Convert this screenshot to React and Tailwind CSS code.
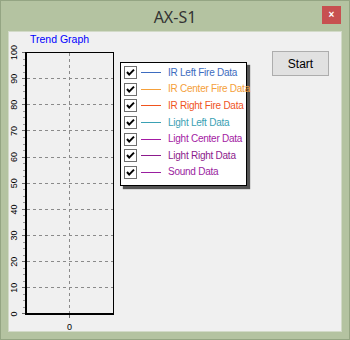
import React from "react";

const series = [
  { name: "IR Left Fire Data", color: "#3d6cc0" },
  { name: "IR Center Fire Data", color: "#f5a03a" },
  { name: "IR Right Fire Data", color: "#f0541e" },
  { name: "Light Left Data", color: "#3aa1b4" },
  { name: "Light Center Data", color: "#a31aa3" },
  { name: "Light Right Data", color: "#8c1b8c" },
  { name: "Sound Data", color: "#9a1ea0" },
];

function Chart() {
  const bottom = 282;
  const step = 26.15;
  const vals = [0, 10, 20, 30, 40, 50, 60, 70, 80, 90, 100];
  const minor = [];
  for (let k = 0; k < 40; k++) {
    if (k % 4 === 0) continue;
    minor.push(Math.floor(bottom - (k * step) / 4) + 0.5);
  }
  return (
    <svg width="111" height="299" className="block shrink-0" style={{ fontFamily: '"Liberation Sans", Arial, sans-serif' }}>
      <text x="21" y="10.5" fontSize="10.5" fill="#0000ff">Trend Graph</text>
      {vals.slice(1, 10).map((v, i) => {
        const y = Math.floor(bottom - (i + 1) * step) + 0.5;
        return <line key={v} x1="18" x2="104" y1={y} y2={y} stroke="#8a8a8a" strokeDasharray="3 3" />;
      })}
      <line x1="60.5" x2="60.5" y1="21" y2="281" stroke="#8a8a8a" strokeDasharray="3 3" />
      {minor.map((y, i) => (
        <line key={i} x1="14" x2="16" y1={y} y2={y} stroke="#9a9a9a" />
      ))}
      {vals.map((v, i) => {
        const y = i === 0 ? 281.5 : i === 10 ? 20.5 : Math.floor(bottom - i * step) + 0.5;
        return <line key={"t" + v} x1="13" x2="16" y1={y} y2={y} stroke="#6a6a6a" />;
      })}
      <line x1="17" x2="104.5" y1="20.5" y2="20.5" stroke="#000" />
      <line x1="104.5" x2="104.5" y1="20" y2="282" stroke="#000" />
      <line x1="17" x2="17" y1="20" y2="283" stroke="#000" strokeWidth="2" />
      <line x1="16" x2="105" y1="282" y2="282" stroke="#000" strokeWidth="2" />
      <line x1="60.5" x2="60.5" y1="283" y2="286" stroke="#6a6a6a" />
      {vals.map((v, i) => {
        const y = bottom - i * step;
        return (
          <text key={"l" + v} transform={`translate(8.2,${y}) rotate(-90)`} textAnchor="middle" fontSize="9" fill="#000">
            {v}
          </text>
        );
      })}
      <text x="60.5" y="298" textAnchor="middle" fontSize="9" fill="#000">0</text>
    </svg>
  );
}

function Check() {
  return (
    <div className="w-[13px] h-[13px] shrink-0 border border-[#707070] bg-white flex items-center justify-center">
      <svg width="11" height="11" viewBox="0 0 11 11">
        <path d="M2 5 L4.2 7.6 L9 2.6" fill="none" stroke="#000" strokeWidth="2" />
      </svg>
    </div>
  );
}

export default function App() {
  return (
    <div className="w-[350px] h-[340px] bg-[#b4c3a1] border border-[#94a583] flex flex-col" style={{ fontFamily: '"Liberation Sans", Arial, sans-serif' }}>
      <div className="h-[30px] shrink-0 relative flex items-center justify-center">
        <span className="text-[16px] text-[#333] leading-none mt-[1px]" style={{ fontFamily: '"Noto Sans", "Open Sans", sans-serif' }}>AX-S1</span>
        <div className="absolute left-[321px] top-[5px] w-[19px] h-[18px] bg-[#c75050] flex items-center justify-center text-white text-[10px] font-bold leading-none">
          ×
        </div>
      </div>
      <div className="mx-[7px] mb-[7px] flex-1 border border-[#d2dac8] bg-[#f0f0f0] flex items-start">
        <Chart />
        <div className="mt-[30px] ml-[0px] w-[127px] h-[124px] shrink-0 border border-black bg-white shadow-[3px_3px_1px_rgba(0,0,0,0.65)] pt-[1.5px]">
          {series.map((s) => (
            <div key={s.name} className="h-[16.6px] flex items-center pl-[3px]">
              <Check />
              <div className="ml-[4px] w-[20px] h-px shrink-0" style={{ backgroundColor: s.color }} />
              <span className="ml-[7px] text-[10px] tracking-[-0.25px] whitespace-nowrap leading-none" style={{ color: s.color }}>
                {s.name}
              </span>
            </div>
          ))}
        </div>
        <button className="ml-auto mr-[12px] mt-[19px] w-[57px] h-[25px] border border-[#adadad] bg-[#e1e1e1] text-[12px] text-black flex items-center justify-center">
          Start
        </button>
      </div>
    </div>
  );
}
